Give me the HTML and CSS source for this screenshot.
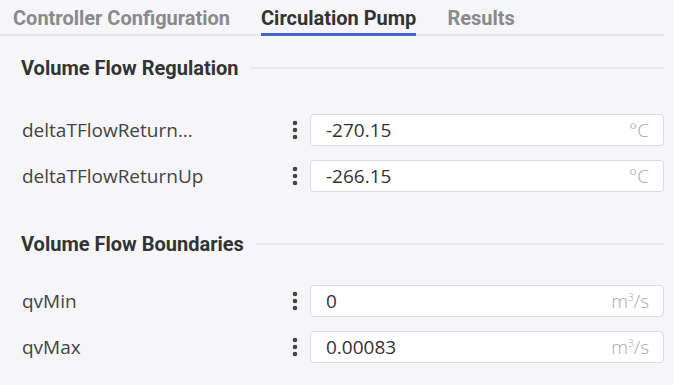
FILE: index.html
```html
<!DOCTYPE html>
<html lang="en">
<head>
    <meta charset="UTF-8">
    <meta name="viewport" content="width=device-width, initial-scale=1.0">
    <title>Circulation Pump</title>
    <link rel="stylesheet" href="styles.css">
</head>
<body>
    <div class="tabs">
        <div class="tab">Controller Configuration</div>
        <div class="tab active">Circulation Pump</div>
        <div class="tab">Results</div>
    </div>

    <div class="section">
        <div class="section-title">
            <h3>Volume Flow Regulation</h3>
            <span class="rule"></span>
        </div>
        <div class="field">
            <label>deltaTFlowReturn...</label>
            <svg class="kebab" width="6" height="20" viewBox="0 0 6 20">
                <circle cx="3" cy="3" r="2.3"/><circle cx="3" cy="10" r="2.3"/><circle cx="3" cy="17" r="2.3"/>
            </svg>
            <div class="input">
                <span class="value">-270.15</span>
                <span class="unit">°C</span>
            </div>
        </div>
        <div class="field">
            <label>deltaTFlowReturnUp</label>
            <svg class="kebab" width="6" height="20" viewBox="0 0 6 20">
                <circle cx="3" cy="3" r="2.3"/><circle cx="3" cy="10" r="2.3"/><circle cx="3" cy="17" r="2.3"/>
            </svg>
            <div class="input">
                <span class="value">-266.15</span>
                <span class="unit">°C</span>
            </div>
        </div>
    </div>

    <div class="section">
        <div class="section-title">
            <h3>Volume Flow Boundaries</h3>
            <span class="rule"></span>
        </div>
        <div class="field">
            <label>qvMin</label>
            <svg class="kebab" width="6" height="20" viewBox="0 0 6 20">
                <circle cx="3" cy="3" r="2.3"/><circle cx="3" cy="10" r="2.3"/><circle cx="3" cy="17" r="2.3"/>
            </svg>
            <div class="input">
                <span class="value">0</span>
                <span class="unit">m<sup>3</sup>/s</span>
            </div>
        </div>
        <div class="field">
            <label>qvMax</label>
            <svg class="kebab" width="6" height="20" viewBox="0 0 6 20">
                <circle cx="3" cy="3" r="2.3"/><circle cx="3" cy="10" r="2.3"/><circle cx="3" cy="17" r="2.3"/>
            </svg>
            <div class="input">
                <span class="value">0.00083</span>
                <span class="unit">m<sup>3</sup>/s</span>
            </div>
        </div>
    </div>
</body>
</html>
```

FILE: styles.css
```css
body {
    margin: 0;
    background-color: #f6f6f8;
    font-family: "Open Sans", "Noto Sans", sans-serif;
    color: #333;
}
.tabs {
    display: flex;
    gap: 31px;
    padding-left: 13px;
    margin-right: 10px;
    border-bottom: 2px solid #e7e7ea;
}
.tab {
    font-family: Roboto, sans-serif;
    font-weight: 700;
    font-size: 20px;
    line-height: 24px;
    padding: 6px 0 3px;
    color: #8a8a8c;
    border-bottom: 3px solid transparent;
    margin-bottom: -2px;
}
.tab.active {
    color: #333;
    border-bottom-color: #4466cc;
}
.section {
    padding: 20px 10px 0 21px;
}
.section + .section {
    padding-top: 26px;
}
.section-title {
    display: flex;
    align-items: center;
    margin-bottom: 34px;
}
.section + .section .section-title {
    margin-bottom: 29px;
}
.section-title h3 {
    margin: 0;
    font-family: Roboto, sans-serif;
    font-weight: 700;
    font-size: 20px;
    line-height: 24px;
    color: #333;
}
.rule {
    flex: 1;
    height: 2px;
    margin-left: 12px;
    background-color: #e9e9ec;
}
.field {
    display: flex;
    align-items: center;
    height: 32px;
    margin-bottom: 14px;
}
.field label {
    width: 270px;
    padding-left: 1px;
    font-size: 19px;
    color: #444;
}
.kebab {
    fill: #444;
    margin-right: 12px;
}
.input {
    flex: 1;
    display: flex;
    justify-content: space-between;
    align-items: center;
    height: 30px;
    padding: 0 14px 0 15px;
    background-color: #fff;
    border: 1px solid #dcdcdf;
    border-radius: 4px;
    font-size: 19px;
}
.value {
    color: #333;
}
.unit {
    color: #aaa;
    font-weight: 300;
}
.unit sup {
    font-size: 10px;
    vertical-align: 7px;
    line-height: 0;
}
```
